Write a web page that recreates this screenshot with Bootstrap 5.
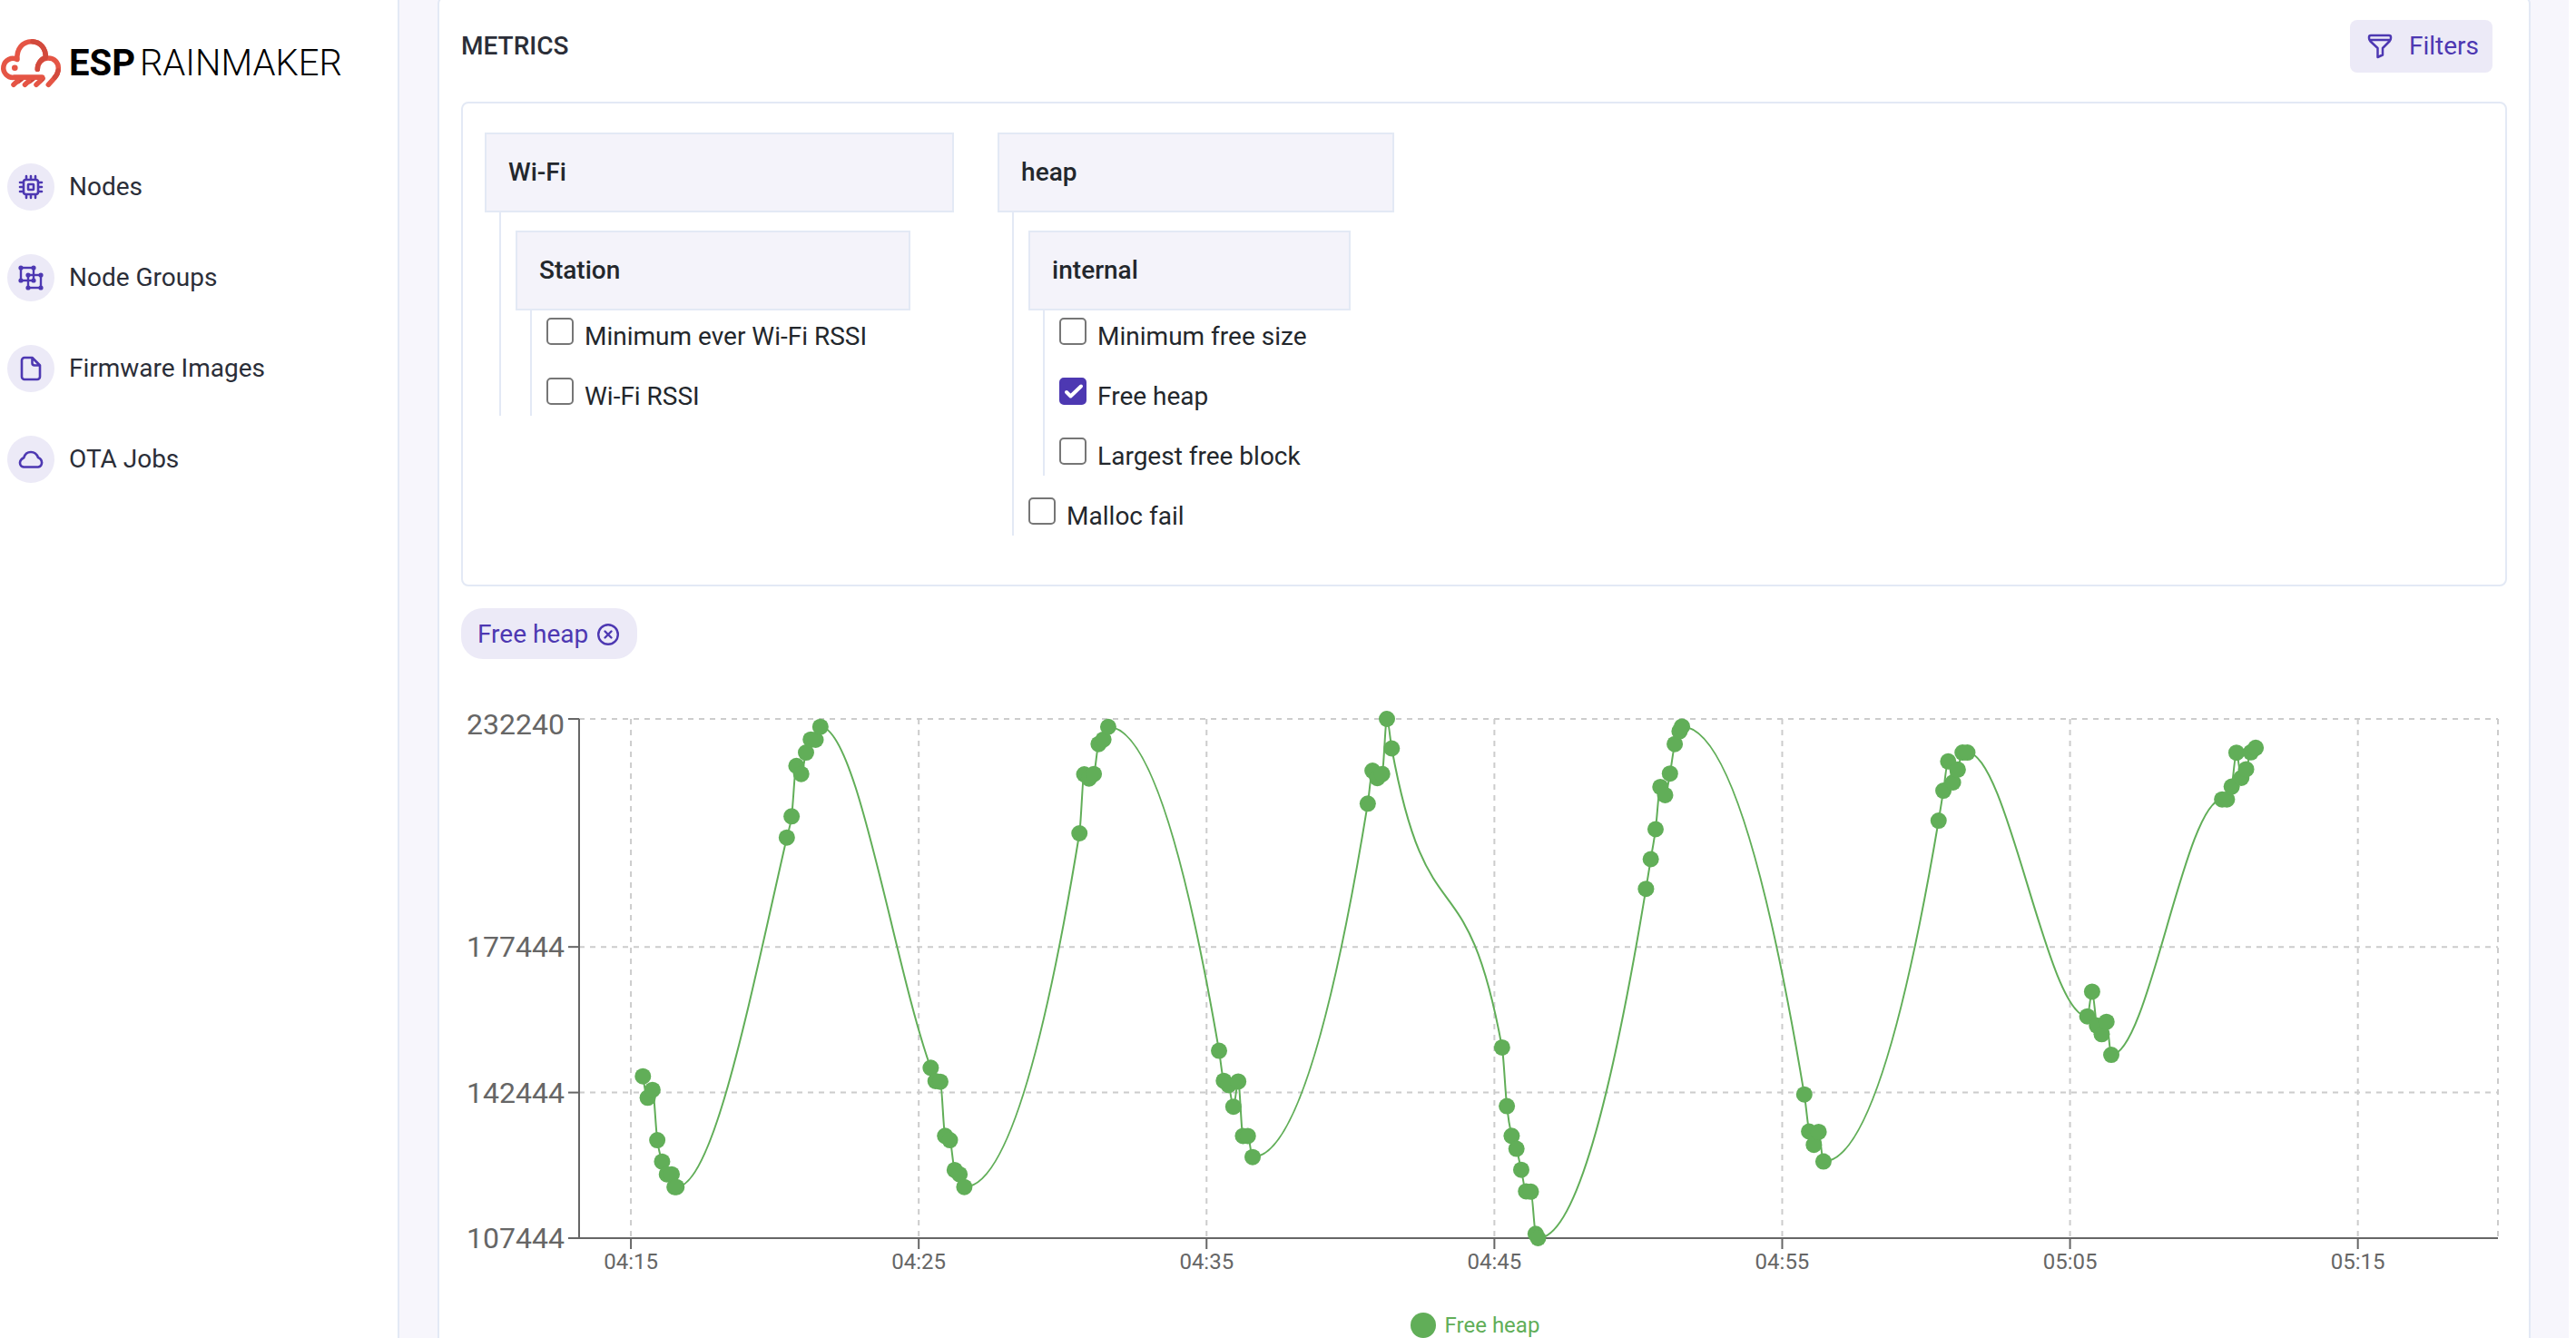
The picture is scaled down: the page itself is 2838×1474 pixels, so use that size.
<!DOCTYPE html>
<html lang="en">
<head>
<meta charset="utf-8">
<meta name="viewport" content="width=device-width, initial-scale=1">
<title>ESP RainMaker - Metrics</title>
<link href="https://cdn.jsdelivr.net/npm/bootstrap@5.3.0/dist/css/bootstrap.min.css" rel="stylesheet">
<style>
  :root {
    --brand: #4d38b2;
    --brand-soft: #eceaf7;
    --line: #e3e9f5;
    --ink: #2b2e38;
    --series: #61ae58;
  }
  body { font-family: Roboto, "Liberation Sans", sans-serif; font-size: 28px; line-height: 42px; color: #23272c; background: #fff; }
  .side { width: 440px; border-right: 2px solid var(--line); }
  .brand { height: 60px; margin: 40px 0 80px; gap: 8px; color: #000; font-size: 40px; line-height: 48px; }
  .brand-text { gap: 5px; }
  .brand-bold { font-weight: 700; }
  .brand-light { font-weight: 300; }
  .side-link { height: 52px; margin-bottom: 48px; padding: 0 0 0 8px; gap: 16px; color: var(--ink); }
  .side-link:hover { color: var(--brand); }
  .side-icon { width: 52px; height: 52px; background: var(--brand-soft); color: var(--brand); }
  .stage { background: #f7f6fc; padding: 0 42px; min-width: 0; }
  .metrics { margin-top: -4px; padding: 24px 24px 0; background: #fff; border: 2px solid var(--line); border-bottom: 0; border-radius: 8px 8px 0 0; }
  .metrics-title { font-size: 28px; line-height: 42px; font-weight: 500; color: var(--ink); }
  .metrics-head { padding-right: 16px; margin-bottom: 32px; }
  .btn-filters { --bs-btn-font-size: 28px; --bs-btn-line-height: 42px; --bs-btn-color: var(--brand); --bs-btn-bg: var(--brand-soft); --bs-btn-hover-bg: #dfdbf2; --bs-btn-hover-color: var(--brand); --bs-btn-border-radius: 8px; padding: 7px 14px 7px 18px; gap: 18px; }
  .picker { padding: 32px 24px 54px; border: 2px solid var(--line); border-radius: 8px; }
  .tree-title { height: 88px; padding: 0 24px; font-size: 28px; line-height: 42px; font-weight: 500; background: #f4f3fa; border: 2px solid var(--line); }
  .tree-list { margin: 0 0 0 16px; padding-left: 16px; border-left: 2px solid var(--line); }
  .tree-branch { margin-right: 48px; }
  .tree-list > .tree-branch { padding-top: 20px; }
  .tree-leaf { padding: 8px 48px 0 0; gap: 12px; }
  .tree-list > li + li { margin-top: 16px; }
  .tree-leaf .form-check-input { width: 30px; height: 30px; margin: 0; border: 2px solid #767676; border-radius: 5px; }
  .tree-leaf .form-check-input:checked { background-color: var(--brand); border-color: var(--brand); background-size: 30px 30px;
    background-image: url("data:image/svg+xml,%3csvg xmlns='http://www.w3.org/2000/svg' viewBox='0 0 30 30'%3e%3cpath fill='none' stroke='%23fff' stroke-width='4' stroke-linecap='round' stroke-linejoin='round' d='M8 16l4.500 4.500L24 9.500'/%3e%3c/svg%3e"); }
  .chip { height: 56px; margin-top: 24px; padding: 2px 20px 0 18px; gap: 10px; border-radius: 24px; background: var(--brand-soft); color: var(--brand); }
  .chip-close { width: 24px; height: 24px; color: inherit; }
  .chart { height: 676px; margin-top: 44px; }
  .chart svg { width: 100%; height: 100%; }
  .chart text { fill: #666; }
  .tick-y { font-size: 32px; text-anchor: end; }
  .tick-x { font-size: 24px; text-anchor: middle; }
  .grid-line { stroke: #ccc; stroke-width: 2; stroke-dasharray: 6 6; }
  .axis-line { stroke: #666; stroke-width: 2; }
  .curve { fill: none; stroke: var(--series); stroke-width: 2; }
  .dot { fill: var(--series); }
  .legend-row { padding-right: 20px; gap: 10px; font-size: 24px; line-height: 28px; color: var(--series); }
  .legend-dot { width: 28px; height: 28px; background: var(--series); }
</style>
</head>
<body>
<div class="d-flex min-vh-100 overflow-hidden pe-2">
  <aside class="side flex-shrink-0">
    <a href="#" class="brand d-flex align-items-center text-decoration-none">
      <svg class="flex-shrink-0" width="68" height="60" viewBox="0 0 68 60" fill="none" stroke-linecap="round" stroke-linejoin="round" stroke-width="5.500" aria-hidden="true">
        <path stroke="#cf463a" d="M24 46.500L20 49.500M36.500 46.500L32.500 49.500M47 46.500L45 48.500"/>
        <path stroke="#e55545" d="M46.500 45.300H15.500A10.500 10.500 0 1 1 19 25.500C18 14 25 5.700 34.700 5.700C44 5.700 51 13 50.200 24.300M41.300 36.300C41 30 46 24 53 24C60 24 64.300 29 64.300 35C64.300 39 63 42.500 60 45.800L53.300 53.300"/>
        <path stroke="#d24a3d" d="M36 5.800C44 6.500 51 13 50.200 23.500C45 25 41.300 30 41.300 36.300M60.500 45C62.500 43 63.500 41 64 38"/>
        <path stroke="#e55545" d="M46.500 45.300H15.500M19 49.500L15 53.300M31.500 49.500L27.500 53.300M44 49.500L40 53.300"/>
        <circle cx="16.300" cy="34.700" r="3.300" fill="#e55545"/>
      </svg>
      <span class="brand-text d-flex"><span class="brand-bold">ESP</span><span class="brand-light">RAINMAKER</span></span>
    </a>
    <nav class="nav flex-column" aria-label="Main">
      <a class="nav-link side-link d-flex align-items-center" href="#">
        <span class="side-icon rounded-circle d-flex align-items-center justify-content-center">
          <svg width="28" height="28" viewBox="0 0 28 28" fill="none" stroke="currentColor" stroke-width="2.600" stroke-linecap="round" aria-hidden="true"><rect x="6" y="6" width="16" height="16" rx="2.500"/><rect x="11" y="11" width="6" height="6" rx=".5"/><path d="M9 5.500V2M14 5.500V2M19 5.500V2M9 26v-3.500M14 26v-3.500M19 26v-3.500M5.500 9H2M5.500 14H2M5.500 19H2M26 9h-3.500M26 14h-3.500M26 19h-3.500"/></svg>
        </span>Nodes</a>
      <a class="nav-link side-link d-flex align-items-center" href="#">
        <span class="side-icon rounded-circle d-flex align-items-center justify-content-center">
          <svg width="28" height="28" viewBox="0 0 28 28" fill="none" stroke="currentColor" stroke-width="2.400" aria-hidden="true"><rect x="3" y="3" width="14" height="14"/><rect x="11" y="11" width="14" height="14"/><g fill="currentColor" stroke="none"><circle cx="3" cy="3" r="2.600"/><circle cx="17" cy="3" r="2.600"/><circle cx="3" cy="17" r="2.600"/><circle cx="17" cy="17" r="2.600"/><circle cx="11" cy="11" r="2.600"/><circle cx="25" cy="11" r="2.600"/><circle cx="11" cy="25" r="2.600"/><circle cx="25" cy="25" r="2.600"/></g></svg>
        </span>Node Groups</a>
      <a class="nav-link side-link d-flex align-items-center" href="#">
        <span class="side-icon rounded-circle d-flex align-items-center justify-content-center">
          <svg width="28" height="28" viewBox="0 0 28 28" fill="none" stroke="currentColor" stroke-width="2.600" stroke-linejoin="round" aria-hidden="true"><path d="M15.500 2H7a3 3 0 0 0-3 3v18a3 3 0 0 0 3 3h14a3 3 0 0 0 3-3V10.500zV8a2.500 2.500 0 0 0 2.500 2.500H24"/></svg>
        </span>Firmware Images</a>
      <a class="nav-link side-link d-flex align-items-center" href="#">
        <span class="side-icon rounded-circle d-flex align-items-center justify-content-center">
          <svg width="28" height="28" viewBox="0 0 28 28" fill="none" stroke="currentColor" stroke-width="2.600" stroke-linejoin="round" aria-hidden="true"><path d="M6 22.500h16a4.500 4.500 0 0 0 4-5c0-2.500-1.500-4.500-4-5.500C20.500 8 17.500 6 14 6s-6.500 2-7.700 6.200C3.500 13.500 2 15.500 2 18a4.500 4.500 0 0 0 4 4.500z"/></svg>
        </span>OTA Jobs</a>
    </nav>
  </aside>

  <main class="stage flex-grow-1 d-flex flex-column">
    <section class="metrics flex-grow-1">
      <div class="metrics-head d-flex align-items-center justify-content-between">
        <h1 class="metrics-title m-0">METRICS</h1>
        <button type="button" class="btn btn-filters d-flex align-items-center">
          <svg width="28" height="28" viewBox="0 0 28 28" fill="none" stroke="currentColor" stroke-width="2.500" stroke-linejoin="round" aria-hidden="true"><path d="M4 2h20a2 2 0 0 1 2 2v1c0 1.500-.5 2.500-1.500 3.500L17 16v7.500L11.500 26V16L3.500 8.500C2.500 7.500 2 6.500 2 5V4a2 2 0 0 1 2-2zM2.500 7h23"/></svg>
          Filters</button>
      </div>

      <div class="picker d-flex align-items-start">
        <div class="tree-branch">
          <h2 class="tree-title d-flex align-items-center m-0">Wi-Fi</h2>
          <ul class="tree-list list-unstyled">
            <li class="tree-branch">
              <h3 class="tree-title d-flex align-items-center m-0">Station</h3>
              <ul class="tree-list list-unstyled">
                <li class="tree-leaf d-flex"><input class="form-check-input" type="checkbox" id="m-min-rssi"><label for="m-min-rssi">Minimum ever Wi-Fi RSSI</label></li>
                <li class="tree-leaf d-flex"><input class="form-check-input" type="checkbox" id="m-rssi"><label for="m-rssi">Wi-Fi RSSI</label></li>
              </ul>
            </li>
          </ul>
        </div>
        <div class="tree-branch">
          <h2 class="tree-title d-flex align-items-center m-0">heap</h2>
          <ul class="tree-list list-unstyled">
            <li class="tree-branch">
              <h3 class="tree-title d-flex align-items-center m-0">internal</h3>
              <ul class="tree-list list-unstyled">
                <li class="tree-leaf d-flex"><input class="form-check-input" type="checkbox" id="m-min-free"><label for="m-min-free">Minimum free size</label></li>
                <li class="tree-leaf d-flex"><input class="form-check-input" type="checkbox" id="m-free" checked><label for="m-free">Free heap</label></li>
                <li class="tree-leaf d-flex"><input class="form-check-input" type="checkbox" id="m-largest"><label for="m-largest">Largest free block</label></li>
              </ul>
            </li>
            <li class="tree-leaf d-flex"><input class="form-check-input" type="checkbox" id="m-malloc"><label for="m-malloc">Malloc fail</label></li>
          </ul>
        </div>
      </div>

      <div class="d-flex">
        <span class="chip d-flex align-items-center">Free heap
          <button type="button" class="chip-close btn p-0 border-0 d-flex" aria-label="Remove Free heap">
            <svg width="24" height="24" viewBox="0 0 24 24" fill="none" stroke="currentColor" stroke-width="2.400" stroke-linecap="round" aria-hidden="true"><circle cx="12" cy="12" r="10.800"/><path d="M8.500 8.500l7 7M15.500 8.500l-7 7"/></svg>
          </button>
        </span>
      </div>

      <div class="chart" id="heapChart"></div>
      <div class="legend-row d-flex align-items-center justify-content-center">
        <span class="legend-dot rounded-circle"></span><span>Free heap</span>
      </div>
    </section>
  </main>
</div>

<script src="https://cdn.jsdelivr.net/npm/bootstrap@5.3.0/dist/js/bootstrap.bundle.min.js"></script>
<script>
  // Each burst: first sample in seconds after 04:15, then values taken every 10 s.
  const bursts = [
    [25, [146340, 141190, 143070, 131000, 125830, 122780, 122780]],
    [91, [119720]],
    [95, [119720]],
    [325, [203720, 208820, 220950, 218990, 224160, 227280, 227220, 230340]],
    [625, [148390, 145190, 145030, 132030, 131000, 123810, 122780, 119720]],
    [935, [204750, 218930, 217920, 218990, 226210, 227280, 230330]],
    [1226, [152470, 145270, 144210, 139030, 145100, 132010, 132010, 126930]],
    [1536, [211880, 219800, 218030, 218990, 232240, 225150]],
    [1816, [153280, 139170, 132030, 128930, 123870, 118700, 118610, 108470]],
    [1891, [107444]],
    [2116, [191400, 198530, 205730, 215900, 213930, 219100, 226210, 229250]],
    [2191, [230400]],
    [2446, [141980, 133080, 129870, 132990, 125860]],
    [2726, [207800, 215000, 222030, 216970, 220060, 224160, 224160]],
    [3036, [160740, 166700, 158540, 156470, 159430, 151490]],
    [3317, [212890, 212890, 215960, 224120, 218060, 220150, 224210, 225300]]
  ];
  const samples = bursts.flatMap(([start, values]) => values.map((v, i) => [start + i * 10, v]));
  const domain = { t0: -108, t1: 3892, v0: 107444, v1: 232240 };
  const xTicks = ['04:15', '04:25', '04:35', '04:45', '04:55', '05:05', '05:15'];
  const yTicks = [107444, 142444, 177444, 232240];
  const holder = document.getElementById('heapChart');

  // Monotone cubic interpolation, so the curve never overshoots a sample.
  function monotone(p) {
    const n = p.length, d = [], m = [];
    for (let i = 0; i < n - 1; i++) d.push((p[i + 1][1] - p[i][1]) / (p[i + 1][0] - p[i][0]));
    for (let i = 1; i < n - 1; i++) {
      const h0 = p[i][0] - p[i - 1][0], h1 = p[i + 1][0] - p[i][0];
      const q = (d[i - 1] * h1 + d[i] * h0) / (h0 + h1);
      m[i] = (Math.sign(d[i - 1]) + Math.sign(d[i])) * Math.min(Math.abs(d[i - 1]), Math.abs(d[i]), 0.5 * Math.abs(q)) || 0;
    }
    m[0] = (3 * d[0] - m[1]) / 2;
    m[n - 1] = (3 * d[n - 2] - m[n - 2]) / 2;
    let path = `M${p[0]}`;
    for (let i = 0; i < n - 1; i++) {
      const h = (p[i + 1][0] - p[i][0]) / 3;
      path += `C${p[i][0] + h},${p[i][1] + h * m[i]} ${p[i + 1][0] - h},${p[i + 1][1] - h * m[i + 1]} ${p[i + 1]}`;
    }
    return path;
  }

  function draw() {
    const left = 130, top = 22, bottom = 594, right = holder.clientWidth - 10;
    const x = t => left + (t - domain.t0) / (domain.t1 - domain.t0) * (right - left);
    const y = v => bottom - (v - domain.v0) / (domain.v1 - domain.v0) * (bottom - top);
    let s = '';
    yTicks.slice(1).forEach(v => { s += `<line class="grid-line" x1="${left}" x2="${right}" y1="${y(v)}" y2="${y(v)}"/>`; });
    xTicks.forEach((_, i) => { s += `<line class="grid-line" x1="${x(i * 600)}" x2="${x(i * 600)}" y1="${top}" y2="${bottom}"/>`; });
    s += `<line class="grid-line" x1="${right}" x2="${right}" y1="${top}" y2="${bottom}"/>`;
    s += `<path class="axis-line" fill="none" d="M${left} ${top}V${bottom}M${left} ${bottom}H${right}"/>`;
    yTicks.forEach(v => {
      const base = Math.max(y(v) + 11, top + 17);
      s += `<line class="axis-line" x1="${left - 12}" x2="${left}" y1="${y(v)}" y2="${y(v)}"/><text class="tick-y" x="${left - 16}" y="${base}">${v}</text>`;
    });
    xTicks.forEach((label, i) => {
      s += `<line class="axis-line" x1="${x(i * 600)}" x2="${x(i * 600)}" y1="${bottom}" y2="${bottom + 12}"/><text class="tick-x" x="${x(i * 600)}" y="${bottom + 34}">${label}</text>`;
    });
    const pts = samples.map(([t, v]) => [x(t), y(v)]);
    s += `<path class="curve" d="${monotone(pts)}"/>`;
    pts.forEach(([cx, cy]) => { s += `<circle class="dot" cx="${cx}" cy="${cy}" r="9"/>`; });
    holder.innerHTML = `<svg class="d-block" role="img" aria-label="Free heap over time">${s}</svg>`;
  }
  draw();
  window.addEventListener('resize', draw);
</script>
</body>
</html>
